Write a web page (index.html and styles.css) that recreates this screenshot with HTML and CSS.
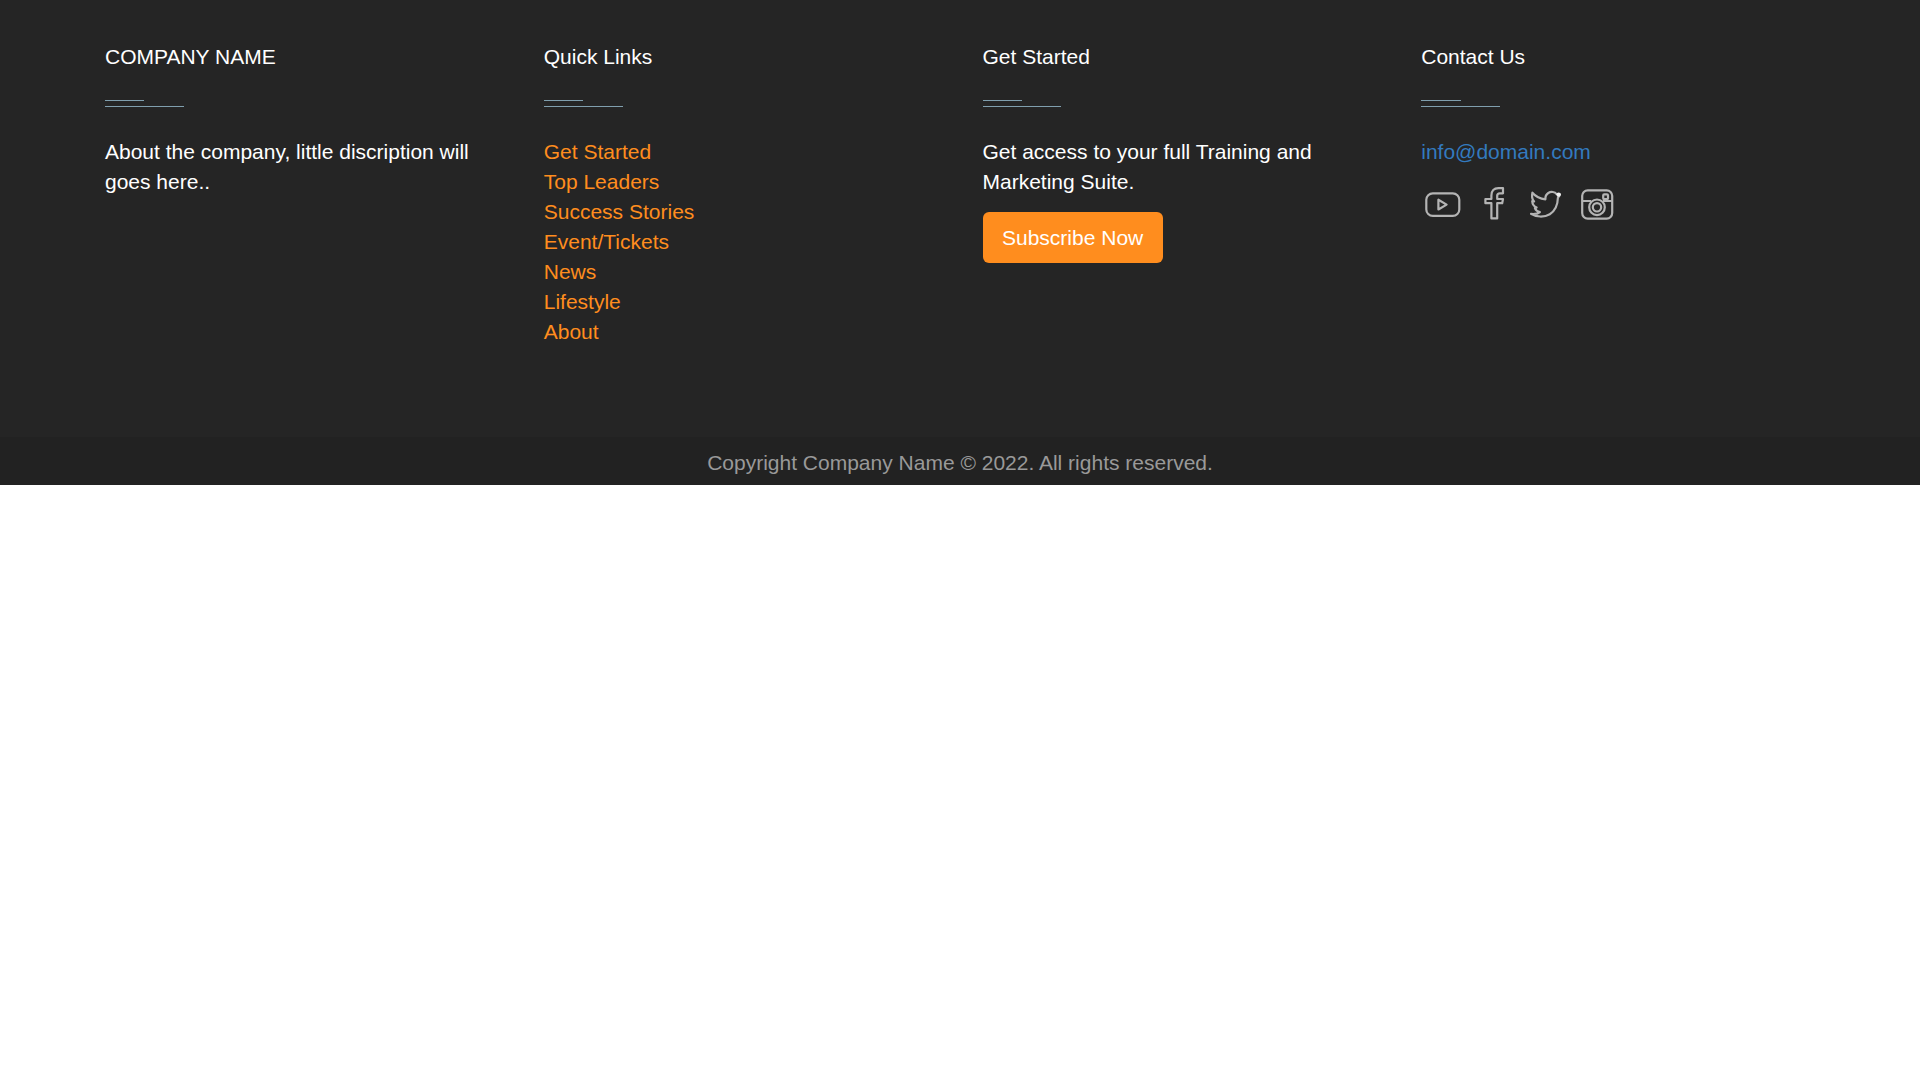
FILE: index.html
```html
<!DOCTYPE html>
<html lang="en">
<head>
<meta charset="utf-8">
<title>Company Name</title>
<link rel="stylesheet" href="styles.css">
</head>
<body>
<footer class="footer">
  <div class="columns">
    <section class="column">
      <h2 class="heading">COMPANY NAME</h2>
      <div class="rules"></div>
      <p class="text">About the company, little discription will goes here..</p>
    </section>
    <section class="column">
      <h2 class="heading">Quick Links</h2>
      <div class="rules"></div>
      <ul class="links">
        <li><a href="#">Get Started</a></li>
        <li><a href="#">Top Leaders</a></li>
        <li><a href="#">Success Stories</a></li>
        <li><a href="#">Event/Tickets</a></li>
        <li><a href="#">News</a></li>
        <li><a href="#">Lifestyle</a></li>
        <li><a href="#">About</a></li>
      </ul>
    </section>
    <section class="column">
      <h2 class="heading">Get Started</h2>
      <div class="rules"></div>
      <p class="text">Get access to your full Training and Marketing Suite.</p>
      <a class="button" href="#">Subscribe Now</a>
    </section>
    <section class="column">
      <h2 class="heading">Contact Us</h2>
      <div class="rules"></div>
      <a class="mail" href="mailto:info@domain.com">info@domain.com</a>
      <div class="social">
        <a href="#" aria-label="YouTube"><svg class="icon" viewBox="0 0 45 45"><rect x="5.3" y="13.3" width="33" height="22.6" rx="6.5"/><path d="M17.4 19.7v9.8l8.2-4.9z"/></svg></a>
        <a href="#" aria-label="Facebook"><svg class="icon" viewBox="0 0 45 45"><path d="M18.4 38.4V23.2H12.4V19h6V15.4C18.4 10.5 21 8.1 25.4 8.1h4.6v5.2h-3.1c-2 0-2.7.8-2.7 2.5V19h5.8l-.8 4.2h-5v15.2z"/></svg></a>
        <a href="#" aria-label="Twitter"><svg class="icon" viewBox="0 0 45 45"><path d="M36 14.4l-3.4-.3c-1.8-2.4-5.6-2.9-8.3-1.1-2.2 1.5-3.1 3.9-2.9 6.3-5-.4-9.6-2.6-13-6.6-.8 3.2-.6 6.2 1.7 8.7l-1.9-.2c.2 3 2 5.2 4.4 6.4l-1.7.5c.9 2.4 2.7 3.5 5 4-2.6 2.2-5.7 2.1-8.9 1.8 5 3.2 13.2 3.7 18.8.3 5-3.1 7.9-8.5 8.1-16.4z"/><circle class="spot" cx="34.6" cy="14.6" r="2.2"/></svg></a>
        <a href="#" aria-label="Instagram"><svg class="icon" viewBox="0 0 45 45"><rect x="6.2" y="10.3" width="30" height="28.3" rx="5.5"/><path d="M6.2 21h8.8M27 21h9.2"/><rect x="27.2" y="14.4" width="4.8" height="4.8" rx="1"/><circle cx="21" cy="27.3" r="7.8"/><circle cx="21" cy="27.3" r="4.2"/></svg></a>
      </div>
    </section>
  </div>
  <div class="copyright">Copyright Company Name © 2022. All rights reserved.</div>
</footer>
</body>
</html>
```
FILE: styles.css
```css
* { box-sizing: border-box; }

body {
  margin: 0;
  background: #fff;
  color: #fff;
  font: 21px/30px "Liberation Sans", Arial, sans-serif;
}

a { text-decoration: none; }

.footer { background: #252525; }

.columns {
  display: grid;
  grid-template-columns: repeat(4, 1fr);
  width: 1755px;
  height: 437px;
  margin: 0 auto;
  padding-top: 42px;
}

.column { padding: 0 22.5px; }

.heading {
  margin: 0 0 28px;
  font-size: 21px;
  font-weight: 400;
}

/* short rule stacked over a longer one */
.rules {
  width: 20%;
  height: 7px;
  margin-bottom: 30px;
  border-bottom: 1px solid #809fae;
}

.rules::before {
  content: "";
  display: block;
  width: 50%;
  height: 1px;
  background: #809fae;
}

.text { margin: 0; }

.links {
  margin: 0;
  padding: 0;
  list-style: none;
}

.links a { color: #ff8d1e; }

.button {
  display: inline-block;
  margin-top: 15px;
  padding: 10.5px 19.5px;
  border-radius: 6px;
  background: #ff8d1e;
  color: #fff;
}

.mail { color: #337abf; }

.social {
  display: flex;
  gap: 6.6px;
  margin-top: 13px;
}

.social a { display: block; height: 45px; }

.icon {
  display: block;
  width: 45px;
  height: 45px;
  fill: none;
  stroke: #b4b4b4;
  stroke-width: 2.2;
  stroke-linejoin: round;
}

.icon .spot { fill: #eee; stroke: none; }

.copyright {
  height: 48px;
  padding-top: 11px;
  background: #222;
  color: #999;
  text-align: center;
}
```
